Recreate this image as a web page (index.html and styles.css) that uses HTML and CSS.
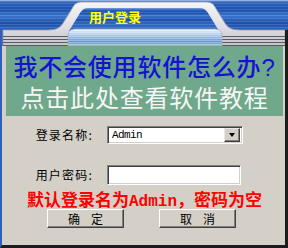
FILE: index.html
```html
<!DOCTYPE html>
<html lang="zh">
<head>
<meta charset="utf-8">
<title>用户登录</title>
<link rel="stylesheet" href="styles.css">
</head>
<body>
<div class="window">
  <div class="titlebar">
    <svg class="skin" width="288" height="46" viewBox="0 0 288 46">
      <defs>
        <linearGradient id="bg" x1="0" y1="0" x2="0" y2="1">
          <stop offset="0" stop-color="#9ab6e2"/>
          <stop offset="0.05" stop-color="#2c63bf"/>
          <stop offset="0.22" stop-color="#1b50ab"/>
          <stop offset="0.34" stop-color="#3a76cf"/>
          <stop offset="0.5" stop-color="#1c4fa8"/>
          <stop offset="0.68" stop-color="#2d67c2"/>
          <stop offset="1" stop-color="#2d67c2"/>
        </linearGradient>
        <pattern id="lines" width="4" height="3" patternUnits="userSpaceOnUse">
          <rect width="4" height="1" fill="#ffffff" opacity="0.13"/>
        </pattern>
        <linearGradient id="silver" x1="0" y1="0" x2="0" y2="1">
          <stop offset="0" stop-color="#f6f6f8"/>
          <stop offset="0.6" stop-color="#dcdce2"/>
          <stop offset="1" stop-color="#c4c4cc"/>
        </linearGradient>
        <linearGradient id="well" x1="0" y1="0" x2="0" y2="1">
          <stop offset="0" stop-color="#f0f5fc"/>
          <stop offset="0.3" stop-color="#b4cdee"/>
          <stop offset="0.75" stop-color="#6394d6"/>
          <stop offset="1" stop-color="#9dbde8"/>
        </linearGradient>
        <pattern id="welllines" width="4" height="2" patternUnits="userSpaceOnUse">
          <rect width="4" height="1" fill="#ffffff" opacity="0.3"/>
        </pattern>
      </defs>
      <rect width="288" height="46" fill="url(#bg)"/>
      <rect width="288" height="30" fill="url(#lines)"/>
      <path d="M3,30 L48,30 C58,30 61,27 65,20 L73,7 C75,3 78,2 83,2 L205,2 C210,2 213,3 215,7 L223,20 C227,27 230,30 240,30 L285,30 L285,46 L3,46 Z" fill="url(#silver)" stroke="#9a9aa6" stroke-width="0.8"/>
      <path d="M88,8 L200,8 C204,8 206,10 208,13 L219,31 L69,31 L80,13 C82,10 84,8 88,8 Z" fill="url(#bg)"/>
      <path d="M88,8 L200,8 C204,8 206,10 208,13 L219,31 L69,31 L80,13 C82,10 84,8 88,8 Z" fill="url(#lines)"/>
      <g stroke="#5a5a60" stroke-width="1">
        <line x1="3" y1="36.5" x2="285" y2="36.5"/>
        <line x1="3" y1="39.5" x2="285" y2="39.5"/>
        <line x1="3" y1="42.5" x2="285" y2="42.5"/>
        <line x1="3" y1="45.5" x2="285" y2="45.5"/>
      </g>
      <path d="M68,46 L68,36 C68,31 71,29 76,29 L214,29 C219,29 222,31 222,36 L222,46 Z" fill="url(#well)" stroke="#9aa8c0" stroke-width="0.8"/>
      <path d="M68,46 L68,36 C68,31 71,29 76,29 L214,29 C219,29 222,31 222,36 L222,46 Z" fill="url(#welllines)"/>
      <rect x="0" y="30" width="2" height="16" fill="#2d5fbd"/>
      <rect x="285" y="30" width="3" height="16" fill="#1c1c1c"/>
    </svg>
    <span class="title">用户登录</span>
  </div>
  <div class="body">
    <div class="banner">
      <div class="ask">我不会使用软件怎么办?</div>
      <div class="tip">点击此处查看软件教程</div>
    </div>
    <div class="row row-name">
      <span class="label">登录名称:</span>
      <div class="combo">
        <span class="combo-text">Admin</span>
        <span class="combo-btn"><span class="arrow"></span></span>
      </div>
    </div>
    <div class="row row-pass">
      <span class="label">用户密码:</span>
      <div class="field"></div>
    </div>
    <div class="hint">默认登录名为<span class="mono">Admin</span>，密码为空</div>
    <div class="actions">
      <button class="btn"><span>确</span><span>定</span></button>
      <button class="btn btn-cancel"><span>取</span><span>消</span></button>
    </div>
  </div>
</div>
</body>
</html>
```

FILE: styles.css
```css
* {
  box-sizing: border-box;
}

html, body {
  margin: 0;
  padding: 0;
  background: #d4d0c8;
}

.window {
  width: 288px;
  height: 248px;
  overflow: hidden;
  display: flex;
  flex-direction: column;
  font-family: "Noto Sans CJK SC", "Noto Sans", sans-serif;
}

.titlebar {
  position: relative;
  height: 46px;
  flex: none;
}

.skin {
  display: block;
}

.title {
  position: absolute;
  left: 89px;
  top: 9px;
  font-size: 13px;
  line-height: 16px;
  font-weight: bold;
  color: #ffff00;
}

.body {
  flex: 1;
  display: flex;
  flex-direction: column;
  background: #d4d0c8;
  border-left: 2px solid #2d5fbd;
  border-right: 3px solid #1c1c1c;
  border-bottom: 3px solid #1c1c1c;
  padding: 0 2px 0 4px;
}

.banner {
  height: 70px;
  background: #70a88c;
  padding: 6px 0 2px;
  text-align: center;
  font-family: "Liberation Sans", "Noto Sans CJK SC", sans-serif;
  font-size: 24px;
  line-height: 31px;
  letter-spacing: 0.8px;
}

.ask {
  color: #1414d2;
  font-weight: 500;
}

.tip {
  color: #f6f6f6;
}

.row {
  display: flex;
  align-items: center;
}

.row-name {
  margin-top: 10px;
  height: 18px;
}

.row-pass {
  margin-top: 21px;
  height: 20px;
}

.label {
  width: 87px;
  margin-right: 14px;
  text-align: right;
  font-size: 12px;
  line-height: 14px;
  letter-spacing: 1.2px;
  color: #000;
}

.combo {
  width: 136px;
  height: 18px;
  display: flex;
  align-items: center;
  justify-content: space-between;
  background: #fff;
  border-top: 1px solid #808080;
  border-left: 1px solid #808080;
  border-bottom: 1px solid #ffffff;
  border-right: 1px solid #ffffff;
  box-shadow: inset 1px 1px 0 #404040, inset -1px -1px 0 #d4d0c8;
  padding: 2px 2px 2px 4px;
}

.combo-text {
  font-family: "Liberation Mono", monospace;
  font-size: 11px;
  letter-spacing: -0.6px;
  line-height: 12px;
  color: #000;
}

.combo-btn {
  width: 16px;
  height: 14px;
  display: flex;
  align-items: center;
  justify-content: center;
  background: #d4d0c8;
  border-top: 1px solid #e8e8e8;
  border-left: 1px solid #e8e8e8;
  border-bottom: 1px solid #404040;
  border-right: 1px solid #404040;
  box-shadow: inset -1px -1px 0 #808080;
}

.arrow {
  width: 0;
  height: 0;
  border-left: 3.5px solid transparent;
  border-right: 3.5px solid transparent;
  border-top: 4px solid #000;
}

.field {
  width: 134px;
  height: 20px;
  background: #fff;
  border-top: 1px solid #808080;
  border-left: 1px solid #808080;
  border-bottom: 1px solid #ffffff;
  border-right: 1px solid #ffffff;
  box-shadow: inset 1px 1px 0 #404040, inset -1px -1px 0 #d4d0c8;
}

.hint {
  height: 24px;
  padding-top: 4px;
  line-height: 20px;
  text-align: center;
  font-size: 17px;
  font-weight: bold;
  color: #ff0000;
  white-space: nowrap;
}

.mono {
  font-family: "Liberation Mono", monospace;
  font-size: 16px;
  font-weight: bold;
}

.actions {
  display: flex;
  gap: 35px;
  padding-left: 41px;
  height: 19px;
}

.btn {
  width: 77px;
  height: 19px;
  margin: 0;
  padding: 0;
  display: flex;
  align-items: center;
  justify-content: center;
  gap: 11px;
  font-family: "Noto Sans CJK SC", sans-serif;
  font-size: 12px;
  line-height: 14px;
  color: #000;
  background: #d4d0c8;
  border-top: 1px solid #ffffff;
  border-left: 1px solid #ffffff;
  border-bottom: 1px solid #404040;
  border-right: 1px solid #404040;
  box-shadow: inset -1px -1px 0 #808080;
}
```
